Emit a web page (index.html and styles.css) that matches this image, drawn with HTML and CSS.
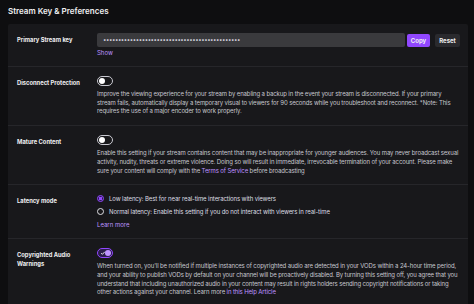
FILE: index.html
```html
<!DOCTYPE html>
<html>
<head>
<meta charset="utf-8">
<link rel="stylesheet" href="styles.css">
</head>
<body>
<div class="page">
  <h1 class="title">Stream Key &amp; Preferences</h1>
  <div class="panel">
    <div class="row">
      <div class="label">Primary Stream key</div>
      <div class="content">
        <div class="keyline">
          <div class="keyinput">••••••••••••••••••••••••••••••••••••••••••••••</div>
          <button class="btn btn-primary">Copy</button>
          <button class="btn btn-secondary">Reset</button>
        </div>
        <a class="link show">Show</a>
      </div>
    </div>
    <div class="row">
      <div class="label">Disconnect Protection</div>
      <div class="content">
        <span class="toggle"><span class="knob"></span></span>
        <p class="desc">Improve the viewing experience for your stream by enabling a backup in the event your stream is disconnected. If your primary stream fails, automatically display a temporary visual to viewers for 90 seconds while you troubleshoot and reconnect. *Note: This requires the use of a major encoder to work properly.</p>
      </div>
    </div>
    <div class="row">
      <div class="label">Mature Content</div>
      <div class="content">
        <span class="toggle"><span class="knob"></span></span>
        <p class="desc">Enable this setting if your stream contains content that may be inappropriate for younger audiences. You may never broadcast sexual activity, nudity, threats or extreme violence. Doing so will result in immediate, irrevocable termination of your account. Please make sure your content will comply with the <a class="link">Terms of Service</a> before broadcasting</p>
      </div>
    </div>
    <div class="row">
      <div class="label">Latency mode</div>
      <div class="content">
        <div class="radio checked"><span class="dot"></span><span>Low latency: Best for near real-time interactions with viewers</span></div>
        <div class="radio"><span class="dot"></span><span>Normal latency: Enable this setting if you do not interact with viewers in real-time</span></div>
        <a class="link learn">Learn more</a>
      </div>
    </div>
    <div class="row">
      <div class="label">Copyrighted Audio Warnings</div>
      <div class="content">
        <span class="toggle on"><svg class="check" viewBox="0 0 10 10"><path d="M2 5.2 L4 7.2 L8 3" fill="none" stroke="#efeff1" stroke-width="1.6"/></svg><span class="knob"></span></span>
        <p class="desc">When turned on, you'll be notified if multiple instances of copyrighted audio are detected in your VODs within a 24-hour time period, and your ability to publish VODs by default on your channel will be proactively disabled. By turning this setting off, you agree that you understand that including unauthorized audio in your content may result in rights holders sending copyright notifications or taking other actions against your channel. Learn more <a class="link">in this Help Article</a></p>
      </div>
    </div>
  </div>
</div>
</body>
</html>
```

FILE: styles.css
```css
* { box-sizing: border-box; }
html, body { margin: 0; padding: 0; background: #0e0e10; }
body {
  font-family: Inter, "Noto Sans", "Liberation Sans", sans-serif;
  color: #efeff1;
  width: 474px;
  height: 304px;
  overflow: hidden;
}
.page { padding: 6px 6px 0 8px; }
.title {
  margin: 0;
  font-size: 8px;
  font-weight: 600;
  line-height: 10px;
  height: 18px;
  color: #efeff1;
}
.panel {
  background: #18181b;
  border-radius: 2px;
}
.row {
  display: flex;
  padding: 9px 7px 9px 9px;
  border-top: 1px solid #26262a;
}
.row:first-child { border-top: none; }
.label {
  width: 80px;
  flex: none;
  font-size: 5.8px;
  font-weight: 700;
  line-height: 9px;
  padding-right: 8px;
  padding-top: 2px;
}
.content { flex: 1; min-width: 0; }
.keyline { display: flex; align-items: center; height: 14px; padding-right: 1px; }
.keyinput {
  flex: 1;
  height: 14px;
  background: #3a3a3d;
  border-radius: 2px;
  font-size: 6px;
  line-height: 14px;
  padding-left: 6px;
  color: #dedee3;
  letter-spacing: -0.4px;
  overflow: hidden;
  white-space: nowrap;
}
.btn {
  border: none;
  height: 13px;
  font-family: inherit;
  font-size: 6px;
  font-weight: 700;
  color: #efeff1;
  border-radius: 2px;
  padding: 0;
}
.btn-primary { background: #9147ff; width: 23px; margin-left: 2px; }
.btn-secondary { background: #2a2a2e; width: 25px; margin-left: 5px; }
.link { color: #bf94ff; text-decoration: none; }
.show { display: block; font-size: 6px; line-height: 8px; margin-top: 2px; }
.toggle {
  display: flex;
  align-items: center;
  width: 16px;
  height: 10px;
  border: 1px solid #c8c8d0;
  border-radius: 5px;
  padding: 0 1px;
  position: relative;
}
.toggle .knob {
  width: 6px;
  height: 6px;
  border-radius: 50%;
  background: #ffffff;
}
.toggle.on {
  border-color: #9147ff;
  background: #2b1d4a;
  justify-content: flex-end;
}
.toggle.on .knob { background: #bf94ff; }
.toggle .check {
  position: absolute;
  left: 2px;
  top: 1px;
  width: 6px;
  height: 6px;
}
.desc {
  margin: 4px 0 0;
  font-size: 6px;
  letter-spacing: -0.12px;
  line-height: 8.7px;
  color: #c7c7cf;
}
.radio {
  display: flex;
  align-items: center;
  font-size: 6px;
  letter-spacing: -0.1px;
  line-height: 9px;
  height: 9px;
  margin-bottom: 4px;
  color: #dedee3;
  gap: 5px;
}
.radio .dot {
  width: 7px;
  height: 7px;
  border-radius: 50%;
  border: 1px solid #dedee3;
  flex: none;
}
.radio.checked .dot {
  border-color: #9147ff;
  background: radial-gradient(circle, #9147ff 0 1.6px, #2b1d4a 2px);
}
.learn { display: block; font-size: 6px; line-height: 9px; margin-top: 2px; }
```
